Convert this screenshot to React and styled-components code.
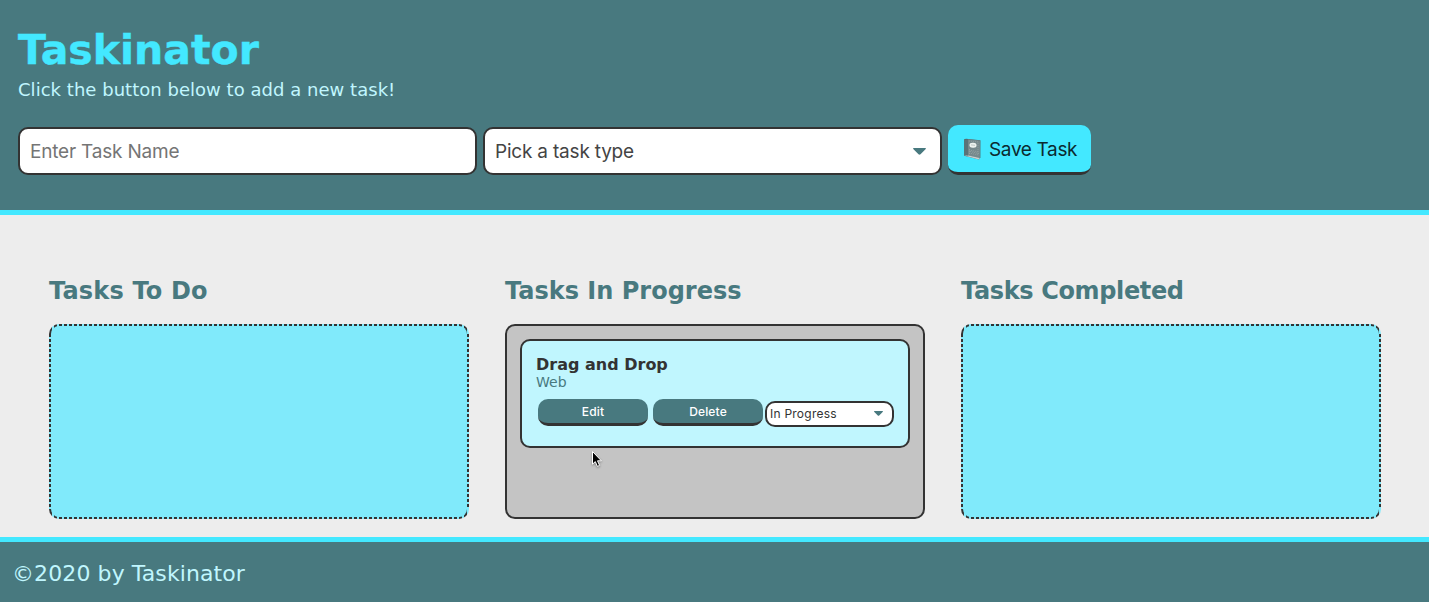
import React from "react";
import styled, { createGlobalStyle } from "styled-components";

const teal = "#48797f";
const cyan = "#43e8ff";
const pale = "#c0f6fe";
const dark = "#333333";
const ui = `Inter, "Liberation Sans", sans-serif`;

const GlobalStyle = createGlobalStyle`
  *, *::before, *::after { box-sizing: border-box; }
  body {
    margin: 0;
    background: #ededed;
    font-family: Verdana, "DejaVu Sans", sans-serif;
    overflow: hidden;
  }
  h1, h2, h3, p { margin: 0; }
`;

const Page = styled.div`
  display: flex;
  flex-direction: column;
  height: 602px;
`;

const Header = styled.header`
  height: 215px;
  padding: 26px 18px 0;
  background: ${teal};
  border-bottom: 5px solid ${cyan};
`;

const Title = styled.h1`
  color: ${cyan};
  font-size: 41px;
  line-height: 48px;
  -webkit-text-stroke: 0.4px ${cyan};
`;

const Intro = styled.p`
  margin-top: 5px;
  color: ${pale};
  font-size: 18px;
  line-height: 22px;
  letter-spacing: 0.03px;
`;

const TaskForm = styled.form`
  display: flex;
  align-items: flex-start;
  gap: 6px;
  margin-top: 24px;
`;

const TextInput = styled.input`
  width: 459px;
  height: 48px;
  margin-top: 2px;
  padding: 0 10px;
  border: 2px solid ${dark};
  border-radius: 10px;
  background: #fff;
  color: ${dark};
  font: 19px ${ui};
  letter-spacing: -0.2px;
  &::placeholder { color: #757575; opacity: 1; }
`;

const SelectBox = styled.div`
  display: flex;
  align-items: center;
  justify-content: space-between;
  width: ${(p) => (p.$small ? 129 : 459)}px;
  height: ${(p) => (p.$small ? 26 : 48)}px;
  margin-top: 2px;
  padding: ${(p) => (p.$small ? "0 9px 1px 3px" : "0 14px 0 10px")};
  border: 2px solid ${dark};
  border-radius: 10px;
  background: #fff;
  color: ${(p) => (p.$small ? dark : "#444")};
  font: ${(p) => (p.$small ? 12 : 19)}px ${ui};
  letter-spacing: ${(p) => (p.$small ? 0.24 : -0.2)}px;
`;

const SaveButton = styled.button`
  display: flex;
  align-items: center;
  gap: 7px;
  width: 143px;
  height: 50px;
  padding: 1px 0 0 15px;
  border: 0;
  border-bottom: 3px solid ${dark};
  border-radius: 10px;
  background: ${cyan};
  color: #0b2a30;
  font: 19px ${ui};
  letter-spacing: -0.35px;
  white-space: nowrap;
`;

const Board = styled.main`
  display: flex;
  gap: 36px;
  height: 322px;
  padding: 61px 48px 0 49px;
`;

const Column = styled.section`
  width: 420px;
`;

const ColumnTitle = styled.h2`
  color: ${teal};
  font-size: 24px;
  line-height: 30px;
  letter-spacing: ${(p) => p.$tracking || 0}px;
`;

/* Empty lists get short, tight dashes painted under a transparent border. */
const dashes = (direction) =>
  `repeating-linear-gradient(${direction}, ${dark} 0 3px, #80eafb 3px 5px)`;

const TaskList = styled.div`
  height: 195px;
  margin-top: 18px;
  padding: 13px;
  border: 2px solid ${(p) => (p.$active ? dark : "transparent")};
  border-radius: 10px;
  background: ${(p) =>
    p.$active
      ? "#c4c4c4"
      : `linear-gradient(#80eafb, #80eafb) padding-box,
         ${dashes("to bottom")} 0 50% / 100% 175px no-repeat border-box,
         ${dashes("to right")} border-box`};
`;

const Card = styled.article`
  height: 109px;
  padding: 14px 14px 0;
  border: 2px solid ${dark};
  border-radius: 10px;
  background: ${pale};
`;

const TaskName = styled.h3`
  color: ${dark};
  font-size: 16px;
  line-height: 19px;
`;

const TaskType = styled.p`
  color: ${teal};
  font-size: 14px;
  line-height: 17px;
`;

const Actions = styled.div`
  display: flex;
  align-items: flex-start;
  margin: 8px 0 0 2px;
`;

const ActionButton = styled.button`
  width: 110px;
  height: 27px;
  margin-right: ${(p) => p.$gap}px;
  padding: 0;
  border: 0;
  border-bottom: 3px solid ${dark};
  border-radius: 10px;
  background: ${teal};
  color: #fff;
  font: 500 12px ${ui};
  letter-spacing: 0.15px;
`;

const Footer = styled.footer`
  height: 65px;
  padding: 17px 12px 0;
  border-top: 5px solid ${cyan};
  background: ${teal};
  color: ${pale};
  font-size: 22px;
  line-height: 30px;
  letter-spacing: 0.1px;
`;

const Pointer = styled.svg`
  position: absolute;
  left: 589px;
  top: 449px;
  filter: drop-shadow(0 1px 1px rgba(0, 0, 0, 0.35));
`;

const Arrow = ({ small }) => (
  <svg width={small ? 9 : 13} height={small ? 5 : 7} viewBox="0 0 13 7">
    <path d="M0.8 0H12.2Q13.6 0.2 12.5 1.3L7.5 6.3Q6.5 7.2 5.5 6.3L0.5 1.3Q-.6.2.8 0Z" fill={teal} />
  </svg>
);

const Notebook = () => (
  <svg width="19" height="22" viewBox="0 0 19 22">
    <path d="M1.2 1.2 3 .8 17.4 2.3 17.4 19.6 15.9 21.4 1.2 17.8Z" fill="#4c666b" />
    <path d="M5 1.2 17.2 2.5 16.9 20 5 17.4Z" fill="#76898c" />
    <path d="M1.2 17.6 3.3 17 16.9 20.1 15.7 21.4Z" fill="#c5d0cf" />
    <path d="M1.2 1.6 5 1.2V17.4L1.2 17.6Z" fill="#5b7378" />
    <path d="m6 3 10 1M6 12l10 2M6 15l10 2M7 13.5l9 2M15 5v12M6.5 11v5" stroke="#9aa8a7" strokeWidth=".7" strokeDasharray="1 1" />
    <ellipse cx="10" cy="7.2" rx="3.6" ry="2.5" fill="#edf3ef" transform="rotate(5 10 7.2)" />
    <path d="M8 6.9 12 7.3" stroke="#a9b4b2" strokeWidth=".7" />
  </svg>
);

export default function App() {
  return (
    <Page>
      <GlobalStyle />
      <Header>
        <Title>Taskinator</Title>
        <Intro>Click the button below to add a new task!</Intro>
        <TaskForm>
          <TextInput placeholder="Enter Task Name" />
          <SelectBox>Pick a task type<Arrow /></SelectBox>
          <SaveButton type="button"><Notebook />Save Task</SaveButton>
        </TaskForm>
      </Header>
      <Board>
        <Column>
          <ColumnTitle $tracking={0.18}>Tasks To Do</ColumnTitle>
          <TaskList />
        </Column>
        <Column>
          <ColumnTitle>Tasks In Progress</ColumnTitle>
          <TaskList $active>
            <Card>
              <TaskName>Drag and Drop</TaskName>
              <TaskType>Web</TaskType>
              <Actions>
                <ActionButton $gap={5}>Edit</ActionButton>
                <ActionButton $gap={2}>Delete</ActionButton>
                <SelectBox $small>In Progress<Arrow small /></SelectBox>
              </Actions>
            </Card>
          </TaskList>
        </Column>
        <Column>
          <ColumnTitle $tracking={-0.36}>Tasks Completed</ColumnTitle>
          <TaskList />
        </Column>
      </Board>
      <Footer>©2020 by Taskinator</Footer>
      <Pointer width="14" height="20" viewBox="0 0 14 20">
        <path d="M3.5 2.5V15.2L6.3 12.6 8.4 17.4 10.6 16.4 8.5 11.8H12.4Z" fill="#000" stroke="#fff" strokeWidth="1" />
      </Pointer>
    </Page>
  );
}
